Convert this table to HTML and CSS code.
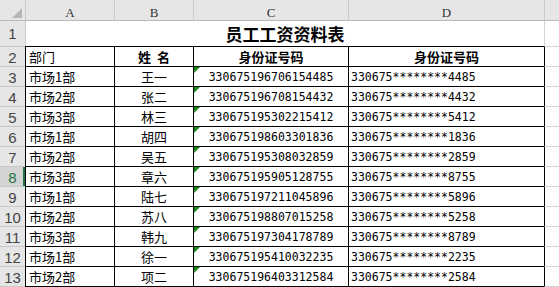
FILE: index.html
```html
<!DOCTYPE html>
<html lang="zh-CN">
<head>
<meta charset="utf-8">
<title>员工工资资料表</title>
<link rel="stylesheet" href="styles.css">
</head>
<body>
<div class="sheet">
  <div class="row hdr">
    <div class="corner"><svg width="24" height="20" viewBox="0 0 24 20"><polygon points="22,8 22,18 12,18" fill="#b5b5b5"/></svg></div>
    <div>A</div><div>B</div><div>C</div><div>D</div><div class="e"></div>
  </div>
  <div class="row r1">
    <div class="rh">1</div>
    <div class="title">员工工资资料表</div>
    <div class="e"></div>
  </div>
  <div class="row body">
    <div class="rh">2</div>
    <div class="l">部门</div><div class="c b">姓&nbsp;&nbsp;名</div><div class="c b">身份证号码</div><div class="c b">身份证号码</div><div class="e"></div>
  </div>
  <div class="row body"><div class="rh">3</div><div class="l">市场1部</div><div class="c">王一</div><div class="c num flag">330675196706154485</div><div class="l num">330675********4485</div><div class="e"></div></div>
  <div class="row body"><div class="rh">4</div><div class="l">市场2部</div><div class="c">张二</div><div class="c num flag">330675196708154432</div><div class="l num">330675********4432</div><div class="e"></div></div>
  <div class="row body"><div class="rh">5</div><div class="l">市场3部</div><div class="c">林三</div><div class="c num flag">330675195302215412</div><div class="l num">330675********5412</div><div class="e"></div></div>
  <div class="row body"><div class="rh">6</div><div class="l">市场1部</div><div class="c">胡四</div><div class="c num flag">330675198603301836</div><div class="l num">330675********1836</div><div class="e"></div></div>
  <div class="row body"><div class="rh">7</div><div class="l">市场2部</div><div class="c">吴五</div><div class="c num flag">330675195308032859</div><div class="l num">330675********2859</div><div class="e"></div></div>
  <div class="row body"><div class="rh sel">8</div><div class="l">市场3部</div><div class="c">章六</div><div class="c num flag">330675195905128755</div><div class="l num">330675********8755</div><div class="e"></div></div>
  <div class="row body"><div class="rh">9</div><div class="l">市场1部</div><div class="c">陆七</div><div class="c num flag">330675197211045896</div><div class="l num">330675********5896</div><div class="e"></div></div>
  <div class="row body"><div class="rh">10</div><div class="l">市场2部</div><div class="c">苏八</div><div class="c num flag">330675198807015258</div><div class="l num">330675********5258</div><div class="e"></div></div>
  <div class="row body"><div class="rh">11</div><div class="l">市场3部</div><div class="c">韩九</div><div class="c num flag">330675197304178789</div><div class="l num">330675********8789</div><div class="e"></div></div>
  <div class="row body"><div class="rh">12</div><div class="l">市场1部</div><div class="c">徐一</div><div class="c num flag">330675195410032235</div><div class="l num">330675********2235</div><div class="e"></div></div>
  <div class="row body"><div class="rh">13</div><div class="l">市场2部</div><div class="c">项二</div><div class="c num flag">330675196403312584</div><div class="l num">330675********2584</div><div class="e"></div></div>
  <div class="row body"><div class="rh"></div><div class="l"></div><div class="c"></div><div class="c"></div><div class="l"></div><div class="e"></div></div>
</div>
</body>
</html>
```

FILE: styles.css
```css
html, body {
  margin: 0;
  padding: 0;
  background: #ffffff;
}
body {
  font-family: "Noto Sans CJK SC", sans-serif;
  color: #000;
  overflow: hidden;
}
.sheet {
  width: 559px;
  height: 287px;
  overflow: hidden;
}
.row {
  display: grid;
  grid-template-columns: 25px 89px 79px 155px 196px 1fr;
  height: 20px;
}
.row > div {
  box-sizing: border-box;
  overflow: hidden;
  white-space: nowrap;
}

/* column header */
.hdr {
  height: 21px;
  background: #e6e6e6;
}
.hdr > div {
  border-left: 1px solid #cbcbcb;
  border-bottom: 1px solid #b9b9b9;
  font-family: "Liberation Serif", serif;
  font-size: 13px;
  color: #333;
  text-align: center;
  padding-top: 5px;
  line-height: 15px;
}
.hdr > .corner {
  border-left: 0;
  padding: 0;
}
.corner svg {
  display: block;
}

/* row header */
.rh {
  background: #e6e6e6;
  border-top: 1px solid #c8c8c8;
  font-family: "Liberation Sans", sans-serif;
  font-size: 15px;
  color: #444;
  text-align: center;
  padding-top: 2px;
  line-height: 17px;
}
.rh.sel {
  background: #d3d3d3;
  color: #217346;
  box-shadow: inset -2px 0 0 #217346;
}

/* row 1 */
.r1 {
  height: 25px;
}
.r1 > .rh {
  border-top: 0;
  line-height: 20px;
  padding-top: 3px;
}
.title {
  grid-column: span 4;
  border-left: 1px solid #cbcbcb;
  text-align: center;
  font-size: 17px;
  font-weight: bold;
  line-height: 24px;
  padding-top: 1px;
}
.r1 > .e {
  border-left: 1px solid #d4d4d4;
}

/* body cells */
.body > .l,
.body > .c {
  border-top: 1px solid #000;
  border-left: 1px solid #000;
  font-size: 13px;
  line-height: 19px;
}
.body > .e {
  border-top: 1px solid #d4d4d4;
  border-left: 1px solid #000;
}
.l {
  text-align: left;
  padding-left: 3px;
}
.c {
  text-align: center;
}
.b {
  font-weight: bold;
}
.body > .num {
  font-family: "DejaVu Sans Mono", monospace;
  font-size: 11.5px;
  line-height: 18px;
  padding-top: 1px;
}
.body > .l.num {
  padding-left: 2px;
}
.flag {
  position: relative;
}
.flag::before {
  content: "";
  position: absolute;
  top: 0;
  left: 0;
  border-top: 6px solid #1b8a1b;
  border-right: 6px solid transparent;
}
```
